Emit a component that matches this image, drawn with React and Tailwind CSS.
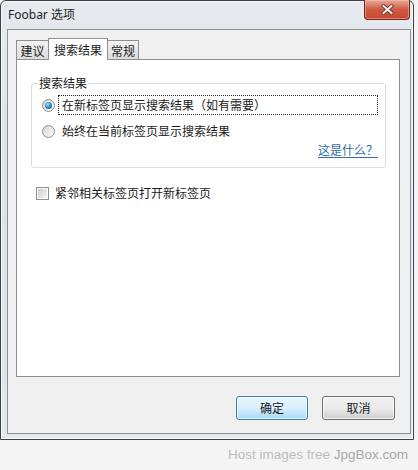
import React, { useState } from 'react';

const cjk = { fontFamily: '"Noto Sans CJK SC", "Noto Sans", sans-serif' };

const Radio = ({ checked }) => (
  <span className="flex h-[13px] w-[13px] shrink-0 items-center justify-center rounded-full border border-[#8e8f8f] bg-gradient-to-br from-[#d5d5d5] to-[#fdfdfd]">
    {checked && (
      <span className="h-[7px] w-[7px] rounded-full bg-[radial-gradient(circle_at_40%_35%,#a6dcf5,#2a7fb8_55%,#1a4f7a)]" />
    )}
  </span>
);

const CloseGlyph = () => (
  <svg width="13" height="11" viewBox="0 0 13 11">
    <path d="M2.5 2 L10.5 9 M10.5 2 L2.5 9" stroke="#6a3a30" strokeWidth="3.8" strokeLinecap="square" />
    <path d="M2.5 2 L10.5 9 M10.5 2 L2.5 9" stroke="#f4f0ee" strokeWidth="2" strokeLinecap="square" />
  </svg>
);

export default function App() {
  const [mode, setMode] = useState('new');
  const [adjacent, setAdjacent] = useState(false);

  return (
    <div className="flex h-[470px] w-[418px] flex-col bg-[#f4f4f4] text-[12px] text-[#1b1b1b]" style={cjk}>
      {/* window */}
      <div className="relative flex h-[440px] w-[414px] flex-col rounded-t-[6px] border border-[#3b4046] bg-gradient-to-b from-[#e6eaee] via-[#dde3e9] to-[#e4e8ec] shadow-[inset_0_0_0_1px_rgba(255,255,255,0.8)]">
        {/* title bar */}
        <div className="flex h-[28px] items-center pl-[7px] text-[12px] text-[#1e1e1e]">
          <span style={{ fontFamily: '"Noto Sans", "Noto Sans CJK SC", sans-serif' }}>Foobar 选项</span>
        </div>
        <button className="absolute right-[3px] top-[-1px] flex h-[20px] w-[46px] items-center justify-center rounded-b-[4px] border border-t-0 border-[#6b2a1f] bg-gradient-to-b from-[#e9a99a] via-[#cf5a43] to-[#c9472f] shadow-[inset_0_0_0_1px_rgba(255,200,190,0.45)]">
          <CloseGlyph />
        </button>

        {/* client area */}
        <div className="ml-[6px] flex h-[405px] w-[404px] flex-col border border-[#8a9097] bg-[#f0f0f0] pl-[8px] pt-[8px]">
          {/* tabs */}
          <div className="flex h-[21px] items-end">
            <div className="flex h-[19px] w-[33px] items-center justify-center border border-b-0 border-[#8c8e94] bg-gradient-to-b from-[#f3f3f3] to-[#dcdcdc] pt-[1px]">
              建议
            </div>
            <div className="relative z-10 -mb-px -ml-px flex h-[22px] w-[60px] items-center justify-center border border-b-0 border-[#8c8e94] bg-white">
              搜索结果
            </div>
            <div className="-ml-px flex h-[19px] w-[32px] items-center justify-center border border-b-0 border-[#8c8e94] bg-gradient-to-b from-[#f3f3f3] to-[#dcdcdc] pt-[1px]">
              常规
            </div>
          </div>

          {/* tab panel */}
          <div className="flex h-[318px] w-[384px] flex-col border border-[#8c8e94] bg-white">
            <fieldset className="ml-[14px] mt-[15px] h-[93px] w-[353px] rounded-[3px] border border-[#d5dfe5] pl-[10px] pr-[7px]">
              <legend className="-ml-[4px] px-[1px] leading-[16px]">搜索结果</legend>
              <div className="mt-[4px] flex flex-col">
                <label className="flex h-[20px] items-center" onClick={() => setMode('new')}>
                  <Radio checked={mode === 'new'} />
                  <span className="ml-[3px] flex h-[20px] w-[320px] items-center border border-dotted border-[#222] pl-[3px] leading-[16px]">
                    在新标签页显示搜索结果（如有需要）
                  </span>
                </label>
                <label className="mt-[6px] flex h-[20px] items-center" onClick={() => setMode('current')}>
                  <Radio checked={mode === 'current'} />
                  <span className="ml-[7px] leading-[16px]">始终在当前标签页显示搜索结果</span>
                </label>
                <div className="mt-[1px] flex justify-end">
                  <a href="#" className="leading-[16px] text-[#2d6ea8] underline underline-offset-2">
                    这是什么？
                  </a>
                </div>
              </div>
            </fieldset>

            <label className="ml-[19px] mt-[18px] flex h-[14px] items-center" onClick={() => setAdjacent(!adjacent)}>
              <span className="flex h-[13px] w-[13px] items-center justify-center border border-[#8f8f8f] bg-white">
                <span className="h-[9px] w-[9px] bg-gradient-to-br from-[#cfcfcf] to-[#f6f6f6]" />
              </span>
              <span className="ml-[6px] leading-[16px]">紧邻相关标签页打开新标签页</span>
            </label>
          </div>

          {/* buttons */}
          <div className="mt-[19px] flex justify-end gap-[14px] pr-[15px]">
            <button className="h-[24px] w-[72px] rounded-[3px] border border-[#3c7fb1] bg-gradient-to-b from-[#eaf6fd] via-[#d9f0fc] to-[#a7d9f5] shadow-[inset_0_0_0_1px_rgba(255,255,255,0.7)]">
              确定
            </button>
            <button className="h-[24px] w-[73px] rounded-[3px] border border-[#707070] bg-gradient-to-b from-[#f2f2f2] via-[#ebebeb] to-[#cfcfcf] shadow-[inset_0_0_0_1px_rgba(255,255,255,0.7)]">
              取消
            </button>
          </div>
        </div>
      </div>

      {/* watermark */}
      <div className="flex flex-1 items-center justify-end pr-[10px]" style={{ fontFamily: '"Liberation Sans", Arial, sans-serif' }}>
        <span className="text-[13.5px] text-[#bcbcbc]">
          Host images free <span className="text-[#a8a8a8]">JpgBox.com</span>
        </span>
      </div>
    </div>
  );
}
